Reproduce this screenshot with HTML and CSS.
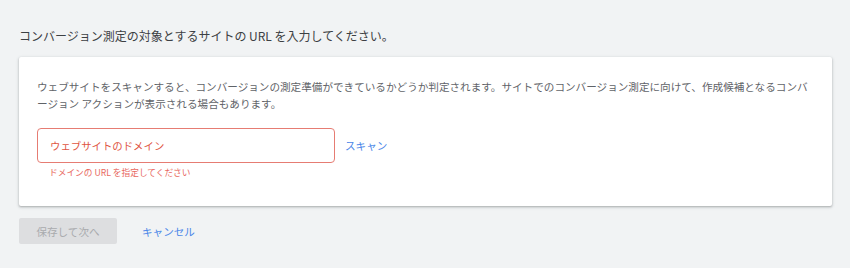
FILE: index.html
```html
<!DOCTYPE html>
<html lang="ja">
<head>
    <meta charset="UTF-8">
    <meta name="viewport" content="width=device-width, initial-scale=1.0">
    <title>コンバージョン測定</title>
    <link rel="stylesheet" href="styles.css">
</head>
<body>
    <div class="page">
        <h1 class="title">コンバージョン測定の対象とするサイトの URL を入力してください。</h1>

        <div class="card">
            <p class="desc">ウェブサイトをスキャンすると、コンバージョンの測定準備ができているかどうか判定されます。サイトでのコンバージョン測定に向けて、作成候補となるコンバージョン アクションが表示される場合もあります。</p>

            <div class="scan-row">
                <input class="domain-input" type="text" placeholder="ウェブサイトのドメイン">
                <a class="link scan" href="javascript:void(0);">スキャン</a>
            </div>
            <p class="error">ドメインの URL を指定してください</p>
        </div>

        <div class="actions">
            <button class="btn-save" disabled>保存して次へ</button>
            <a class="link cancel" href="javascript:void(0);">キャンセル</a>
        </div>
    </div>
</body>
</html>
```

FILE: styles.css
```css
* {
    margin: 0;
    padding: 0;
    box-sizing: border-box;
    font-family: "Noto Sans CJK JP", "Noto Sans", sans-serif;
}
body {
    background: #f1f3f4;
    color: #5f6368;
}
.page {
    padding: 27px 18px 0 19px;
}
.title {
    font-size: 12px;
    font-weight: normal;
    color: #3c4043;
    line-height: 17px;
    margin-bottom: 13px;
}
/* Karte */
.card {
    background: white;
    border-radius: 2px;
    box-shadow: 0 1px 2px rgba(60, 64, 67, 0.3), 0 1px 3px 1px rgba(60, 64, 67, 0.1);
    padding: 21px 18px 26px 18px;
}
.desc {
    font-size: 10.6px;
    line-height: 17px;
    color: #5f6368;
}
.scan-row {
    display: flex;
    align-items: center;
    gap: 10px;
    margin-top: 16px;
}
.domain-input {
    width: 298px;
    height: 35px;
    border: 1px solid #e67c73;
    border-radius: 4px;
    padding: 0 12px;
    font-size: 10.4px;
    outline: none;
    color: #3c4043;
}
.domain-input::placeholder {
    color: #e0543f;
}
.link {
    color: #4a86e8;
    text-decoration: none;
    font-size: 10.6px;
}
.error {
    font-size: 8.7px;
    color: #e8685e;
    line-height: 14px;
    margin-top: 3px;
    padding-left: 12px;
}
/* Buttons unten */
.actions {
    display: flex;
    align-items: center;
    gap: 25px;
    margin-top: 12px;
}
.btn-save {
    width: 98px;
    height: 26px;
    border: none;
    border-radius: 2px;
    background: #dddee0;
    color: #a9abae;
    font-size: 10.6px;
}
.cancel {
    font-size: 10.6px;
}
```
